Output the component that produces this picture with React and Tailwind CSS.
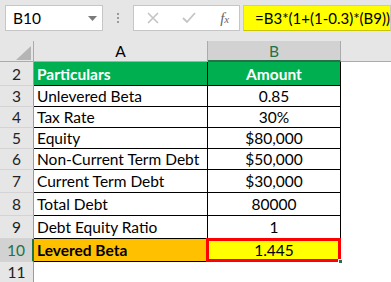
import React from 'react';

const rows = [
    { n: 2, a: 'Particulars', b: 'Amount', h: 'h-[24px]', kind: 'head' },
    { n: 3, a: 'Unlevered Beta', b: '0.85', h: 'h-[21px]' },
    { n: 4, a: 'Tax Rate', b: '30%', h: 'h-[21px]' },
    { n: 5, a: 'Equity', b: '$80,000', h: 'h-[21px]' },
    { n: 6, a: 'Non-Current Term Debt', b: '$50,000', h: 'h-[21px]' },
    { n: 7, a: 'Current Term Debt', b: '$30,000', h: 'h-[23px]' },
    { n: 8, a: 'Total Debt', b: '80000', h: 'h-[23px]' },
    { n: 9, a: 'Debt Equity Ratio', b: '1', h: 'h-[23px]' },
    { n: 10, a: 'Levered Beta', b: '1.445', h: 'h-[23px]', kind: 'result' },
];

function RowHeader({ n, active }) {
    return (
        <div
            className={`w-[34px] shrink-0 flex items-center justify-center border-b border-[#d4d4d4] ${
                active
                    ? 'bg-[#d2d2d2] text-[#217346] border-r-2 border-r-[#217346]'
                    : 'bg-[#e6e6e6] text-[#222] border-r border-r-[#9b9b9b]'
            }`}
        >
            {n}
        </div>
    );
}

export default function App() {
    return (
        <div className="w-[391px] h-[282px] overflow-hidden bg-white font-['Lato','Liberation_Sans',sans-serif] text-[15.5px] leading-[18px] text-black">
            {/* formula bar */}
            <div className="h-[41px] bg-[#e6e6e6] flex items-start pt-[5px] pl-[5px]">
                <div className="w-[101px] h-[26px] bg-white border border-[#c6c6c6] flex items-center justify-between pl-[7px] pr-[5px]">
                    <span>B10</span>
                    <svg width="9" height="5" viewBox="0 0 9 5">
                        <path d="M0 0 H9 L4.5 5 Z" fill="#7a7a7a" />
                    </svg>
                </div>
                <div className="w-[31px] h-[26px] flex flex-col items-center justify-center gap-[2px]">
                    <span className="w-[2px] h-[2px] bg-[#9a9a9a]" />
                    <span className="w-[2px] h-[2px] bg-[#9a9a9a]" />
                    <span className="w-[2px] h-[2px] bg-[#9a9a9a]" />
                </div>
                <div className="w-[110px] h-[26px] bg-white border border-[#c6c6c6] flex items-center pl-[13px]">
                    <svg width="12" height="12" viewBox="0 0 12 12">
                        <path d="M1 1 L11 11 M11 1 L1 11" stroke="#c4c4c4" strokeWidth="1.6" />
                    </svg>
                    <svg width="14" height="12" viewBox="0 0 14 12" className="ml-[23px]">
                        <path d="M1 6 L5 10 L13 1" stroke="#c4c4c4" strokeWidth="1.8" fill="none" />
                    </svg>
                    <span className="ml-[24px] font-['Liberation_Serif',serif] italic text-[#666] text-[15px]">
                        f<span className="text-[11px]">x</span>
                    </span>
                </div>
                <div className="ml-[3px] flex-1 h-[26px] bg-[#ffff00] border border-[#c8c8c8] border-b-[#c9c400] flex items-center pl-[11px] whitespace-nowrap text-[15px]">
                    =B3*(1+(1-0.3)*(B9))
                </div>
            </div>

            {/* column headers */}
            <div className="h-[21px] flex bg-[#e6e6e6] border-b border-[#ababab]">
                <div className="w-[34px] shrink-0 border-r border-[#ababab] flex items-end justify-end pr-[2px] pb-[1px]">
                    <svg width="15" height="14" viewBox="0 0 15 14">
                        <path d="M15 0 V14 H0 Z" fill="#b5b5b5" />
                    </svg>
                </div>
                <div className="w-[174px] shrink-0 border-r border-[#ababab] flex items-center justify-center">A</div>
                <div className="w-[133px] shrink-0 bg-[#d2d2d2] text-[#217346] border-r border-[#ababab] border-b-2 border-b-[#217346] -mb-[1px] flex items-center justify-center">
                    B
                </div>
                <div className="flex-1" />
            </div>

            {/* data rows */}
            {rows.map((r) => {
                const head = r.kind === 'head';
                const result = r.kind === 'result';
                return (
                    <div key={r.n} className={`flex ${r.h}`}>
                        <RowHeader n={r.n} active={result} />
                        <div
                            className={`w-[174px] shrink-0 border-r border-b border-black flex items-center pl-[3px] whitespace-nowrap ${
                                head ? 'bg-[#00b050] text-white font-bold' : result ? 'bg-[#ffc000] font-bold' : ''
                            }`}
                        >
                            {r.a}
                        </div>
                        <div
                            className={`relative w-[133px] shrink-0 border-r border-b border-black flex items-center justify-center ${
                                head ? 'bg-[#00b050] text-white font-bold' : result ? 'bg-[#ffff00]' : ''
                            }`}
                        >
                            {r.b}
                            {result && (
                                <>
                                    <div className="absolute -top-[1px] -left-[2px] -right-[1px] -bottom-[1px] border-[3px] border-[#ff0000]" />
                                    <div className="absolute -right-[3px] -bottom-[3px] w-[5px] h-[5px] bg-[#217346] border border-white" />
                                </>
                            )}
                        </div>
                        <div className="flex-1" />
                    </div>
                );
            })}

            <div className="flex h-[20px]">
                <div className="w-[34px] shrink-0 flex items-center justify-center bg-[#e6e6e6] text-[#222] border-r border-[#9b9b9b]">
                    11
                </div>
                <div className="flex-1" />
            </div>
        </div>
    );
}
